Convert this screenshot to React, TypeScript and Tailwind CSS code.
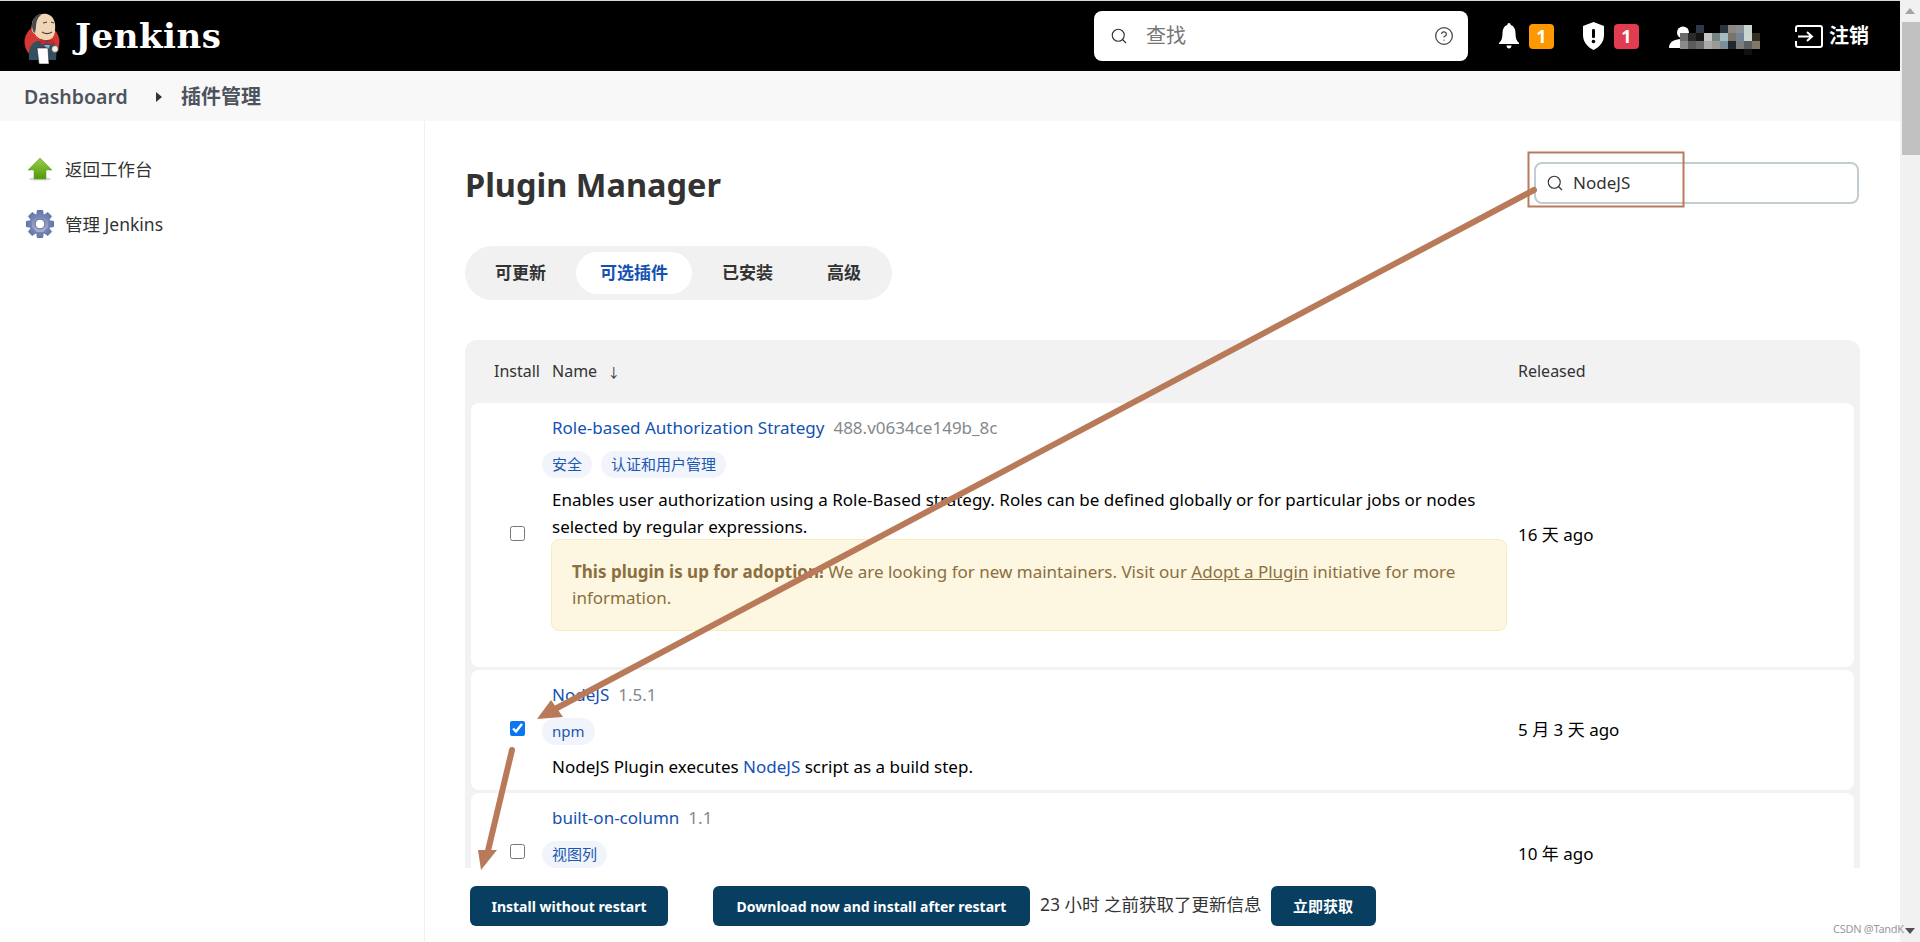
import { Search, CircleHelp } from "lucide-react";

const font = "font-['Noto_Sans','Noto_Sans_CJK_SC',sans-serif]";

const mosaic = [
  ["transparent", "transparent", "#32364a", "#000000", "#000000", "#2d333f", "#8d8980", "#8e8f96", "#c9d4cf", "#000000"],
  ["#6b6b6b", "#2a2a2a", "#141414", "#c5c5c5", "#76847f", "#a5bcc0", "#7a7468", "#74859a", "#cbd8d2", "#352e20"],
  ["#8a8a8a", "#5b5b5b", "#6b6b6b", "#aaaaaa", "#9a9a96", "#7a8e9e", "#212630", "#7d7d80", "#5c5f60", "#807868"],
];

const gearTeeth = [0, 45, 90, 135, 180, 225, 270, 315];

function JenkinsLogo() {
  return (
    <svg width="50" height="56" viewBox="0 0 50 56">
      <circle cx="22" cy="34" r="17.5" fill="#d33833" />
      <path d="M9 52 C8 42 10 36 17 33 L32 32 C36 36 37 42 36 52 Z" fill="#335061" />
      <path d="M12 16 C13 8 20 5 27 6 C34 8 36 15 35 22 C35 28 32 32 27 32 C22 32 17 30 15 26 C12 25 11 20 12 16 Z" fill="#f0d6b7" />
      <path d="M12 17 C12 10 17 6 22 6 C18 9 16 13 16 19 L15 25 C13 24 12 21 12 17 Z" fill="#49484a" />
      <path d="M22 24 C25 26 29 26 32 24 M23 15 L27 14 M31 14 L34 15" stroke="#5a3a28" strokeWidth="1.2" fill="none" />
      <path d="M21 31 L27 34 L33 31 L33 37 L27 35 L21 37 Z" fill="#e02020" />
      <path d="M24 37 L30 37 L28 42 Z" fill="#8fb0c4" />
      <path d="M17 40 L28 40 L29 56 L19 56 Z" fill="#ffffff" stroke="#222" strokeWidth="0.6" />
      <circle cx="35" cy="41" r="3.4" fill="#f4ede2" stroke="#333" strokeWidth="0.6" />
    </svg>
  );
}

function GreenArrow() {
  return (
    <svg width="30" height="24" viewBox="0 0 30 24">
      <defs>
        <linearGradient id="arrowFill" x1="0" y1="0" x2="0" y2="1">
          <stop offset="0" stopColor="#9ccc4e" />
          <stop offset="1" stopColor="#4e9a06" />
        </linearGradient>
      </defs>
      <ellipse cx="15" cy="22" rx="11" ry="1.6" fill="#d5d5d5" />
      <path d="M15 1 L27 13 L21 13 L21 22 L9 22 L9 13 L3 13 Z" fill="url(#arrowFill)" stroke="#6fa32f" strokeWidth="0.6" />
    </svg>
  );
}

function GearIcon() {
  return (
    <svg width="30" height="30" viewBox="0 0 30 30">
      <defs>
        <linearGradient id="gearFill" gradientUnits="userSpaceOnUse" x1="0" y1="0" x2="0" y2="30">
          <stop offset="0" stopColor="#5f74a8" />
          <stop offset="1" stopColor="#c0bcdc" />
        </linearGradient>
      </defs>
      <g fill="url(#gearFill)">
        <circle cx="15" cy="15" r="10.5" />
        {gearTeeth.map((a) => (
          <path key={a} d="M12 1 L18 1 L19 7 L11 7 Z" transform={`rotate(${a} 15 15)`} />
        ))}
      </g>
      <circle cx="15" cy="15" r="4.8" fill="#ffffff" stroke="#6d7398" strokeWidth="1" />
    </svg>
  );
}

function Tag({ label }: { label: string }) {
  return (
    <span className="h-[27px] px-[10px] rounded-full bg-[#f1f5fb] text-[#1c57b0] text-[15px] flex items-center">
      {label}
    </span>
  );
}

function PluginRow({
  name,
  version,
  tags,
  released,
  checked,
  rowClass,
  children,
}: {
  name: string;
  version: string;
  tags: string[];
  released: string;
  checked?: boolean;
  rowClass: string;
  children?: React.ReactNode;
}) {
  return (
    <div className={`flex bg-white rounded-lg shrink-0 ${rowClass}`}>
      <div className="w-[81px] flex justify-center items-center pl-[12px] pb-[4px]">
        <input
          type="checkbox"
          defaultChecked={checked}
          className="w-[15px] h-[15px] m-0 accent-[#0b76ef]"
        />
      </div>
      <div className="w-[966px] pt-[13px]">
        <div className="flex items-baseline gap-[9px] h-[24px] leading-[24px]">
          <span className="text-[17px] text-[#1351b4]">{name}</span>
          <span className="text-[17px] text-[#84888e]">{version}</span>
        </div>
        <div className="flex gap-[9px] -ml-[10px] mt-[11px]">
          {tags.map((t) => (
            <Tag key={t} label={t} />
          ))}
        </div>
        {children}
      </div>
      <div className="flex-1 flex items-center text-[17px] text-black">{released}</div>
    </div>
  );
}

export default function App() {
  return (
    <div className={`relative w-[1920px] h-[942px] overflow-hidden flex bg-white ${font}`}>
      <div className="w-[1900px] flex flex-col">
        <div className="h-px bg-[#d8d8d8] shrink-0" />
        {/* top bar */}
        <header className="h-[70px] bg-black flex items-center shrink-0 pr-[31px]">
          <div className="ml-[20px] w-[50px] h-[56px]">
            <JenkinsLogo />
          </div>
          <span className="ml-[5px] text-white text-[34px] font-bold font-['DejaVu_Serif',serif] leading-none tracking-[0.5px]">
            Jenkins
          </span>
          <div className="ml-auto w-[374px] h-[50px] bg-white rounded-lg flex items-center pl-[16px] pr-[14px]">
            <Search size={18} strokeWidth={1.5} className="text-[#333]" />
            <span className="ml-[18px] text-[20px] text-[#777]">查找</span>
            <CircleHelp size={20} strokeWidth={1.5} className="ml-auto text-[#444]" />
          </div>
          <svg className="ml-[31px]" width="20" height="26" viewBox="0 0 20 26" fill="#fff">
            <path d="M10 0 C11 0 11.7 .8 11.7 2 C15 3 16.5 6 16.5 10 C16.5 15 17.5 18 20 20 L20 21 L0 21 L0 20 C2.5 18 3.5 15 3.5 10 C3.5 6 5 3 8.3 2 C8.3 .8 9 0 10 0 Z M7.5 22.5 L12.5 22.5 C12.5 24.5 11.3 25.5 10 25.5 C8.7 25.5 7.5 24.5 7.5 22.5 Z" />
          </svg>
          <span className="ml-[10px] w-[25px] h-[25px] rounded bg-[#ff9800] text-white font-bold text-[18px] flex items-center justify-center">
            1
          </span>
          <svg className="ml-[29px]" width="21" height="28" viewBox="0 0 21 28">
            <path d="M10.5 0 L21 4 L21 13 C21 20 16.5 25 10.5 28 C4.5 25 0 20 0 13 L0 4 Z" fill="#fff" />
            <rect x="9" y="7" width="3" height="9" rx="1.2" fill="#000" />
            <circle cx="10.5" cy="19.5" r="1.8" fill="#000" />
          </svg>
          <span className="ml-[10px] w-[25px] h-[25px] rounded bg-[#e23c50] text-white font-bold text-[18px] flex items-center justify-center">
            1
          </span>
          <div className="relative ml-[30px] w-[91px] h-[30px]">
            <svg className="mt-[5px]" width="30" height="22" viewBox="0 0 30 22" fill="#fff">
              <circle cx="14" cy="6.5" r="6" />
              <path d="M0 22 C0 15 6 13 14 13 C22 13 28 15 28 22 Z" />
            </svg>
            <div className="absolute left-[11px] top-[4px] flex flex-col">
              {mosaic.map((row, y) => (
                <div key={y} className="flex">
                  {row.map((c, x) => (
                    <div key={x} className="w-[8px] h-[8px]" style={{ background: c }} />
                  ))}
                </div>
              ))}
              <div className="ml-[64px] w-[8px] h-[6px] bg-[#111]" />
            </div>
          </div>
          <svg className="ml-[35px]" width="28" height="23" viewBox="0 0 28 23" fill="none" stroke="#fff" strokeWidth="2">
            <path d="M1 7 L1 3 C1 2 2 1 3 1 L25 1 C26 1 27 2 27 3 L27 20 C27 21 26 22 25 22 L3 22 C2 22 1 21 1 20 L1 16" />
            <path d="M3 11.5 L16 11.5 M12 7 L17 11.5 L12 16" />
          </svg>
          <span className="ml-[6px] text-white font-bold text-[20px] leading-none">注销</span>
        </header>

        {/* breadcrumb */}
        <nav className="h-[50px] bg-[#f8f8f8] flex items-center shrink-0 pl-[24px] pt-[1px] font-semibold text-[#4d545d]">
          <span className="text-[19.5px] w-[101px]">Dashboard</span>
          <svg className="ml-[31px]" width="6" height="10" viewBox="0 0 6 10" fill="#333">
            <path d="M0 0 L6 5 L0 10 Z" />
          </svg>
          <span className="ml-[19px] text-[20px]">插件管理</span>
        </nav>

        <div className="flex-1 flex min-h-0">
          {/* side panel */}
          <aside className="w-[425px] shrink-0 border-r border-r-[#f0f0f0] pt-[34px] text-[#333] text-[17.5px]">
            <div className="flex items-center h-[28px]">
              <div className="ml-[25px] w-[30px] h-[24px]">
                <GreenArrow />
              </div>
              <span className="ml-[10px]">返回工作台</span>
            </div>
            <div className="flex items-center h-[30px] mt-[26px]">
              <div className="ml-[25px] w-[30px] h-[30px]">
                <GearIcon />
              </div>
              <span className="ml-[10px]">管理 Jenkins</span>
            </div>
          </aside>

          <main className="flex-1 min-w-0 flex flex-col">
            <div className="flex-1 min-h-0 overflow-hidden pl-[40px] pr-[40px]">
              <div className="h-[84px] flex items-start justify-between">
                <h1 className="mt-[42px] text-[32.5px] leading-[44px] font-bold text-[#333]">Plugin Manager</h1>
                <div className="mt-[41px] mr-[1px] w-[325px] h-[42px] rounded-lg border-2 border-[#c3ccd1] flex items-center pl-[10px]">
                  <Search size={18} strokeWidth={1.5} className="text-[#333]" />
                  <span className="ml-[9px] text-[17px] text-[#333]">NodeJS</span>
                </div>
              </div>
              <div className="mt-[41px] w-[427px] h-[54px] rounded-full bg-[#f1f1f1] p-[6px] flex gap-[6px] text-[17px] font-semibold text-[#333] whitespace-nowrap">
                <span className="h-[42px] px-[24px] flex items-center">可更新</span>
                <span className="h-[42px] px-[24px] flex items-center rounded-full bg-white text-[#1351b4]">可选插件</span>
                <span className="h-[42px] px-[24px] flex items-center">已安装</span>
                <span className="h-[42px] px-[24px] flex items-center">高级</span>
              </div>

              <div className="mt-[40px] bg-[#f2f2f2] rounded-t-xl px-[6px] flex flex-col gap-[3px] h-[600px]">
                <div className="h-[60px] pt-[2px] flex items-center text-[16px] text-[#333] shrink-0">
                  <span className="pl-[23px] w-[81px]">Install</span>
                  <span className="w-[966px]">
                    Name <span className="ml-[6px] text-[13px]">↓</span>
                  </span>
                  <span>Released</span>
                </div>
                <PluginRow
                  name="Role-based Authorization Strategy"
                  version="488.v0634ce149b_8c"
                  tags={["安全", "认证和用户管理"]}
                  released="16 天 ago"
                  rowClass="h-[264px]"
                >
                  <p className="mt-[8px] text-[17px] leading-[27px] text-black">
                    Enables user authorization using a Role-Based strategy. Roles can be defined globally or for particular jobs or nodes selected by regular expressions.
                  </p>
                  <div className="mt-[-1px] h-[92px] w-[956px] -ml-px rounded-lg bg-[#fdf6e0] border border-[#f8ebc4] px-[20px] pt-[19px] text-[17px] leading-[26px] text-[#8b6f3f]">
                    <b>This plugin is up for adoption!</b> We are looking for new maintainers. Visit our <u>Adopt a Plugin</u> initiative for more information.
                  </div>
                </PluginRow>
                <PluginRow
                  name="NodeJS"
                  version="1.5.1"
                  tags={["npm"]}
                  released="5 月 3 天 ago"
                  checked
                  rowClass="h-[120px]"
                >
                  <p className="mt-[8px] text-[17px] leading-[27px] text-black">
                    NodeJS Plugin executes <span className="text-[#1351b4]">NodeJS</span> script as a build step.
                  </p>
                </PluginRow>
                <PluginRow
                  name="built-on-column"
                  version="1.1"
                  tags={["视图列"]}
                  released="10 年 ago"
                  rowClass="h-[121px]"
                />
              </div>
            </div>

            {/* sticky install bar */}
            <div className="h-[74px] shrink-0 bg-white flex items-start pt-[18px] pl-[45px]">
              <button className="w-[198px] h-[40px] rounded-md bg-[#083f61] text-white text-[14px] font-bold">
                Install without restart
              </button>
              <button className="ml-[45px] w-[317px] h-[40px] rounded-md bg-[#083f61] text-white text-[14px] font-bold">
                Download now and install after restart
              </button>
              <span className="ml-[10px] text-[17.5px] text-[#333] h-[36px] leading-[36px]">23 小时 之前获取了更新信息</span>
              <button className="ml-[9px] w-[105px] h-[40px] rounded-md bg-[#083f61] text-white text-[15px] font-bold">
                立即获取
              </button>
            </div>
          </main>
        </div>
      </div>

      {/* scrollbar */}
      <div className="w-[20px] bg-[#f1f1f1] flex flex-col items-center relative">
        <svg className="mt-[8px]" width="10" height="6" viewBox="0 0 10 6" fill="#a3a3a3">
          <path d="M5 0 L10 6 L0 6 Z" />
        </svg>
        <div className="mt-[8px] w-[18px] ml-[1px] h-[133px] bg-[#c1c1c1]" />
        <svg className="mt-auto mb-[8px]" width="10" height="6" viewBox="0 0 10 6" fill="#505050">
          <path d="M0 0 L10 0 L5 6 Z" />
        </svg>
      </div>

      {/* annotations drawn on the shot */}
      <svg className="absolute inset-0 pointer-events-none" width="1920" height="942" viewBox="0 0 1920 942">
        <rect x="1528.5" y="152.5" width="155" height="54" fill="none" stroke="#b97a5a" strokeWidth="2" />
        <path d="M1534 190 L555 709" stroke="#b97a5a" strokeWidth="6" strokeLinecap="round" />
        <path d="M537 719 L551 700 L563 717 Z" fill="#b97a5a" />
        <path d="M512 750 L487 855" stroke="#b97a5a" strokeWidth="6" strokeLinecap="round" />
        <path d="M481 870 L478 850 L497 850 Z" fill="#b97a5a" />
      </svg>
      <span className="absolute left-[1833px] top-[921px] text-[11px] tracking-tight text-[#9a9a9a] font-['Noto_Sans',sans-serif]">
        CSDN @TandK
      </span>
    </div>
  );
}
